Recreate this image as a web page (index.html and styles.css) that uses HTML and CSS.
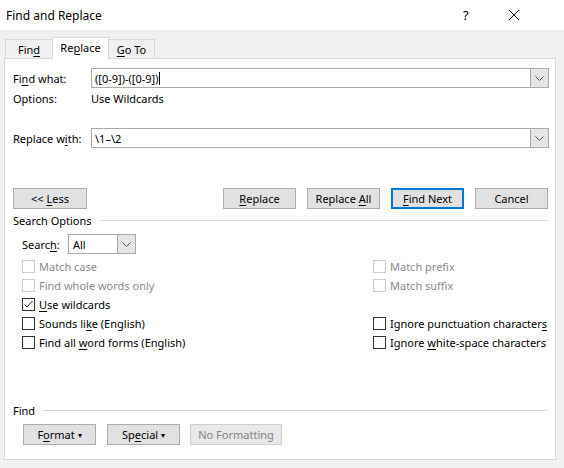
FILE: index.html
```html
<!DOCTYPE html>
<html lang="en">
    <head>
        <meta charset="UTF-8" />
        <meta name="viewport" content="width=device-width, initial-scale=1.0" />
        <link rel="stylesheet" href="styles.css">
        <title>Find and Replace</title>
    </head>

    <body>
        <div class="titlebar">
            <span class="title">Find and Replace</span>
            <span class="help">?</span>
            <span class="close">
                <svg width="12" height="12" viewBox="0 0 12 12"><path d="M1 1L11 11M11 1L1 11" stroke="#000" stroke-width="1" fill="none"/></svg>
            </span>
        </div>

        <div class="window">
            <div class="tabs">
                <div class="tab">Fin<u>d</u></div>
                <div class="tab active">Re<u>p</u>lace</div>
                <div class="tab"><u>G</u>o To</div>
            </div>

            <div class="panel">
                <div class="field-row">
                    <span class="field-label">Fi<u>n</u>d what:</span>
                    <div class="combo">
                        <span class="combo-text">([0-9])-([0-9])<span class="caret"></span></span>
                        <span class="combo-btn"><svg width="9" height="5" viewBox="0 0 9 5"><path d="M0.5 0.5L4.5 4.5L8.5 0.5" stroke="#555" fill="none"/></svg></span>
                    </div>
                </div>

                <div class="options-row">
                    <span class="field-label">Options:</span>
                    <span>Use Wildcards</span>
                </div>

                <div class="field-row replace-row">
                    <span class="field-label">Replace w<u>i</u>th:</span>
                    <div class="combo">
                        <span class="combo-text">\1–\2</span>
                        <span class="combo-btn"><svg width="9" height="5" viewBox="0 0 9 5"><path d="M0.5 0.5L4.5 4.5L8.5 0.5" stroke="#555" fill="none"/></svg></span>
                    </div>
                </div>

                <div class="button-row">
                    <button class="btn">&lt;&lt; <u>L</u>ess</button>
                    <div class="right-buttons">
                        <button class="btn"><u>R</u>eplace</button>
                        <button class="btn">Replace <u>A</u>ll</button>
                        <button class="btn default"><u>F</u>ind Next</button>
                        <button class="btn">Cancel</button>
                    </div>
                </div>

                <div class="group-title">Search Options</div>

                <div class="search-row">
                    <span class="search-label">Searc<u>h</u>:</span>
                    <div class="select">
                        <span class="select-text">All</span>
                        <span class="combo-btn"><svg width="9" height="5" viewBox="0 0 9 5"><path d="M0.5 0.5L4.5 4.5L8.5 0.5" stroke="#555" fill="none"/></svg></span>
                    </div>
                </div>

                <div class="checks">
                    <div class="check disabled"><span class="box"></span><span>Match case</span></div>
                    <div class="check disabled"><span class="box"></span><span>Match prefix</span></div>
                    <div class="check disabled"><span class="box"></span><span>Find whole words only</span></div>
                    <div class="check disabled"><span class="box"></span><span>Match suffix</span></div>
                    <div class="check"><span class="box"><svg width="11" height="11" viewBox="0 0 11 11"><path d="M1.5 5.5L4 8L9.5 2" stroke="#222" stroke-width="1" fill="none"/></svg></span><span><u>U</u>se wildcards</span></div>
                    <div></div>
                    <div class="check"><span class="box"></span><span>Sounds li<u>k</u>e (English)</span></div>
                    <div class="check"><span class="box"></span><span>Ignore punctuation character<u>s</u></span></div>
                    <div class="check"><span class="box"></span><span>Find all <u>w</u>ord forms (English)</span></div>
                    <div class="check"><span class="box"></span><span>Ignore <u>w</u>hite-space characters</span></div>
                </div>

                <div class="group-title find-title">Find</div>

                <div class="format-row">
                    <button class="btn">F<u>o</u>rmat <span class="tri">▾</span></button>
                    <button class="btn">Sp<u>e</u>cial <span class="tri">▾</span></button>
                    <button class="btn wide" disabled>No Formatting</button>
                </div>
            </div>
        </div>
    </body>
</html>
```

FILE: styles.css
```css
@charset "utf-8";

* {
    margin: 0;
    padding: 0;
    box-sizing: border-box;
}

body {
    width: 564px;
    height: 468px;
    overflow: hidden;
    background: #f0f0f0;
    font-family: "Noto Sans", "Open Sans", sans-serif;
    font-size: 11px;
    color: #000;
}

u {
    text-decoration-thickness: 1px;
    text-underline-offset: 2px;
}

.titlebar {
    height: 30px;
    background: #fff;
    display: flex;
    align-items: center;
    padding-left: 6px;
}

.title {
    font-size: 12px;
    flex: 1;
}

.help {
    font-size: 13px;
    width: 44px;
}

.close {
    width: 57px;
    display: flex;
    align-items: center;
    padding-left: 1px;
}

.window {
    padding: 7px 8px 0 4px;
}

.tabs {
    display: flex;
    align-items: flex-end;
    height: 21px;
    padding-left: 1px;
}

.tab {
    height: 19px;
    border: 1px solid #d9d9d9;
    border-bottom: none;
    display: flex;
    align-items: center;
    justify-content: center;
    background: #f0f0f0;
}

.tab:nth-child(1) { width: 47px; border-right: none; }
.tab:nth-child(2) { width: 57px; }
.tab:nth-child(3) { width: 46px; border-left: none; }

.tab.active {
    height: 22px;
    margin-bottom: -1px;
    background: #fff;
    position: relative;
    z-index: 1;
    padding-bottom: 2px;
}

.panel {
    height: 402px;
    background: #fff;
    border: 1px solid #d9d9d9;
    padding: 9px 6px 0 8px;
}

.field-row {
    display: flex;
    height: 20px;
    align-items: center;
}

.field-label {
    width: 78px;
    flex: none;
}

.combo {
    flex: 1;
    height: 20px;
    border: 1px solid #a9a9a9;
    display: flex;
    align-items: stretch;
}

.combo-text {
    flex: 1;
    padding-left: 3px;
    display: flex;
    align-items: center;
}

.caret {
    display: inline-block;
    width: 1px;
    height: 13px;
    background: #000;
    margin-left: 1px;
}

.combo-btn {
    width: 18px;
    background: #e5e5e5;
    border-left: 1px solid #a9a9a9;
    display: flex;
    align-items: center;
    justify-content: center;
}

.options-row {
    display: flex;
    height: 16px;
    align-items: center;
    margin-top: 2px;
}

.replace-row {
    margin-top: 22px;
}

.button-row {
    display: flex;
    margin-top: 40px;
    padding-right: 1px;
}

.right-buttons {
    margin-left: auto;
    display: flex;
    gap: 11px;
}

.btn {
    width: 74px;
    height: 21px;
    background: #e1e1e1;
    border: 1px solid #adadad;
    font-family: inherit;
    font-size: 11px;
    color: #000;
}

.right-buttons .btn {
    width: 73px;
}

.btn.default {
    border-color: #0078d7;
    box-shadow: inset 0 0 0 1px #0078d7;
}

.btn:disabled {
    color: #838383;
    background: #e8e8e8;
    border-color: #cfcfcf;
}

.group-title {
    display: flex;
    align-items: center;
    height: 16px;
    margin-top: 3px;
    padding-right: 1px;
}

.group-title::after {
    content: "";
    flex: 1;
    height: 1px;
    background: #dcdcdc;
    margin-left: 8px;
}

.search-row {
    display: flex;
    align-items: center;
    margin-top: 6px;
    padding-left: 9px;
    height: 20px;
}

.search-label {
    width: 46px;
}

.select {
    width: 68px;
    height: 20px;
    border: 1px solid #a9a9a9;
    display: flex;
}

.select-text {
    flex: 1;
    padding-left: 4px;
    display: flex;
    align-items: center;
}

.checks {
    display: grid;
    grid-template-columns: 351px 1fr;
    grid-auto-rows: 19px;
    margin-top: 3px;
    padding-left: 9px;
}

.checks > :nth-child(1) { grid-column: 1; grid-row: 1; }
.checks > :nth-child(2) { grid-column: 2; grid-row: 1; }
.checks > :nth-child(3) { grid-column: 1; grid-row: 2; }
.checks > :nth-child(4) { grid-column: 2; grid-row: 2; }
.checks > :nth-child(5) { grid-column: 1; grid-row: 3; }
.checks > :nth-child(6) { grid-column: 2; grid-row: 3; }
.checks > :nth-child(7) { grid-column: 1; grid-row: 4; }
.checks > :nth-child(8) { grid-column: 2; grid-row: 4; }
.checks > :nth-child(9) { grid-column: 1; grid-row: 5; }
.checks > :nth-child(10) { grid-column: 2; grid-row: 5; }

.check {
    display: flex;
    align-items: center;
    white-space: nowrap;
}

.box {
    width: 13px;
    height: 13px;
    border: 1px solid #333;
    background: #fff;
    margin-right: 4px;
    display: flex;
    align-items: center;
    justify-content: center;
}

.check.disabled {
    color: #8a8a8a;
}

.check.disabled .box {
    border-color: #cccccc;
}

.find-title {
    margin-top: 50px;
}

.format-row {
    display: flex;
    gap: 11px;
    margin-top: 6px;
    padding-left: 10px;
}

.format-row .btn {
    width: 73px;
}

.format-row .btn.wide {
    width: 92px;
    margin-left: -1px;
}

.tri {
    font-size: 8px;
    vertical-align: 1px;
}
```
